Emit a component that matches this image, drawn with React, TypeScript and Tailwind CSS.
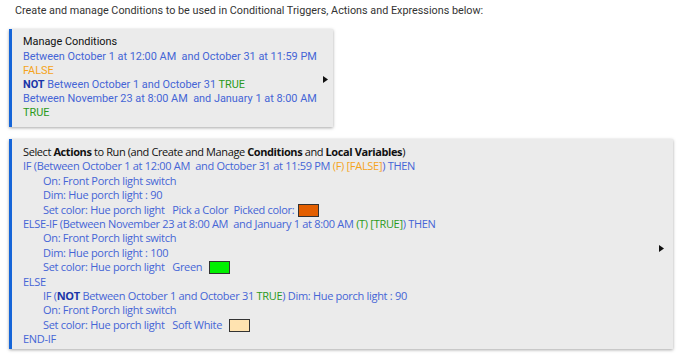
const blue = "text-[#4565d6]";
const orange = "text-[#f5a31a]";
const green = "text-[#2a9a1a]";

function Arrow() {
    return (
        <svg width="5" height="7" viewBox="0 0 5 7" className="shrink-0 self-center mt-[2px]">
            <path d="M0 0 L5 3.5 L0 7 Z" fill="#111" />
        </svg>
    );
}

function Swatch({ color }: { color: string }) {
    return (
        <span
            className="inline-block w-[21px] h-[13px] border border-[#333] align-[-3px] ml-1"
            style={{ backgroundColor: color }}
        />
    );
}

function Indent({ children }: { children: React.ReactNode }) {
    return <div className={`pl-5 ${blue}`}>{children}</div>;
}

export default function App() {
    return (
        <div className="w-[690px] h-[361px] bg-white overflow-hidden">
            <p className="pl-[15px] pt-[3px] text-[10.8px] leading-[16px] text-[#333] font-['Roboto',sans-serif]">
                Create and manage Conditions to be used in Conditional
                Triggers, Actions and Expressions below:
            </p>

            <div className="ml-[9px] mt-[10px] w-[324px] h-[98px] flex items-center bg-[#ebebeb] border-l-[3px] border-[#1565d8] shadow-[0_1px_3px_rgba(0,0,0,0.35)] pl-[11px] pr-[5px] font-['Roboto',sans-serif] text-[10.9px] leading-[14.2px] whitespace-pre">
                <div className="flex-1">
                    <div className="text-[#111]">Manage Conditions</div>
                    <div className={blue}>
                        Between October 1 at 12:00 AM  and October 31 at 11:59 PM
                    </div>
                    <div className={orange}>FALSE</div>
                    <div className={blue}>
                        <b className="text-[#1a35a8]">NOT</b> Between October 1 and
                        October 31 <span className={green}>TRUE</span>
                    </div>
                    <div className={blue}>
                        Between November 23 at 8:00 AM  and January 1 at 8:00 AM
                    </div>
                    <div className={green}>TRUE</div>
                </div>
                <Arrow />
            </div>

            <div className="ml-[9px] mt-[12px] w-[664px] h-[210px] flex items-start bg-[#ebebeb] border-l-[3px] border-[#1565d8] shadow-[0_1px_3px_rgba(0,0,0,0.35)] pt-[6px] pl-[11px] pr-[9px] font-['Open_Sans',sans-serif] text-[11px] leading-[14.4px] whitespace-pre tracking-[-0.3px]">
                <div className="flex-1">
                    <div className="text-[#111] tracking-[-0.4px]">
                        Select <b>Actions</b> to Run (and Create and Manage{" "}
                        <b>Conditions</b> and <b>Local Variables</b>)
                    </div>
                    <div className={blue}>
                        IF (Between October 1 at 12:00 AM  and October 31 at 11:59 PM{" "}
                        <span className={orange}>(F) [FALSE]</span>) THEN
                    </div>
                    <Indent>On: Front Porch light switch</Indent>
                    <Indent>Dim: Hue porch light : 90</Indent>
                    <Indent>
                        Set color: Hue porch light   Pick a Color  Picked color:
                        <Swatch color="#e35f00" />
                    </Indent>
                    <div className={blue}>
                        ELSE-IF (Between November 23 at 8:00 AM  and January 1 at 8:00 AM{" "}
                        <span className={green}>(T) [TRUE]</span>) THEN
                    </div>
                    <Indent>On: Front Porch light switch</Indent>
                    <Indent>Dim: Hue porch light : 100</Indent>
                    <Indent>
                        Set color: Hue porch light   Green <Swatch color="#00f000" />
                    </Indent>
                    <div className={blue}>ELSE</div>
                    <Indent>
                        IF (<b className="text-[#1a35a8]">NOT</b> Between October 1 and
                        October 31 <span className={green}>TRUE</span>) Dim: Hue porch
                        light : 90
                    </Indent>
                    <Indent>On: Front Porch light switch</Indent>
                    <Indent>
                        Set color: Hue porch light   Soft White{" "}
                        <Swatch color="#ffe3b0" />
                    </Indent>
                    <div className={blue}>END-IF</div>
                </div>
                <Arrow />
            </div>
        </div>
    );
}
